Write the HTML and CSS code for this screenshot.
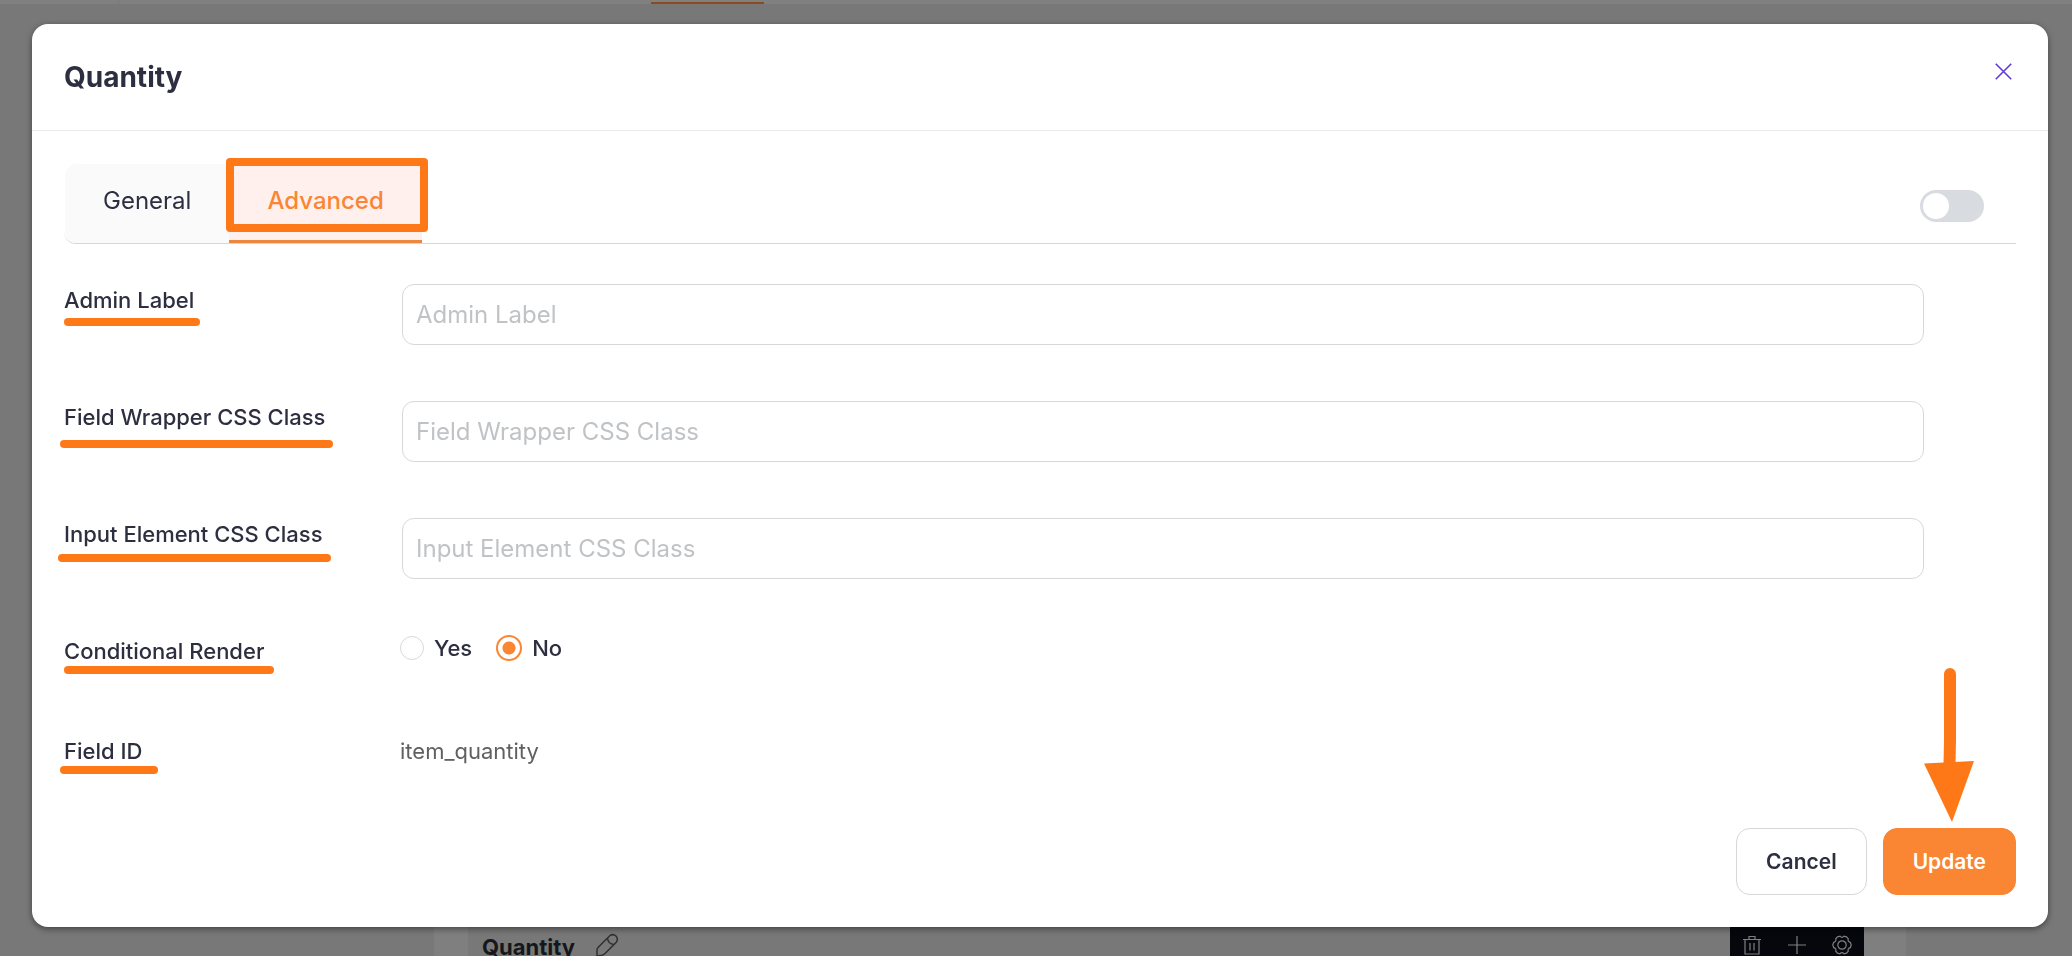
FILE: index.html
```html
<!DOCTYPE html>
<html lang="en">
<head>
<meta charset="utf-8">
<meta name="viewport" content="width=device-width, initial-scale=1">
<title>Quantity</title>
<link rel="stylesheet" href="styles.css">
</head>
<body>
<div class="page">
  <div class="page-nav"><span class="nav-side"></span><span class="nav-active"></span></div>
  <main class="page-main">
    <div class="field-card">
      <div class="field-head">
        <span class="field-name">Quantity</span>
        <svg class="icon-pencil" viewBox="0 0 24 24" aria-hidden="true"><path d="M2 23V17Q2 15.500 3.500 14L15 2.500Q18 .5 21 3Q23.500 6 21.500 9L10 20.500Q8.500 22 7 22.300ZM12.500 5Q13 11 19 11.500"/></svg>
      </div>
      <div class="field-tools">
        <button type="button" aria-label="Delete"><svg viewBox="0 0 20 20"><path d="M1 4.500h18M3 4.500v14.500h14V4.500M7 4.500V1.500h6v3M8 8v7.500M12 8v7.500"/></svg></button>
        <button type="button" aria-label="Add"><svg viewBox="0 0 20 20"><path d="M10 1v18M1 10h18"/></svg></button>
        <button type="button" aria-label="Settings"><svg viewBox="0 0 20 20"><path d="M5.500 1.800L8 1.200Q10 3.500 12 1.200L14.500 1.800L16.300 3.800Q15.300 6.500 18.300 7.300L19.200 10L18.300 12.700Q15.300 13.500 16.300 16.200L14.500 18.200L12 18.800Q10 16.500 8 18.800L5.500 18.200L3.700 16.200Q4.700 13.500 1.700 12.700L.8 10L1.700 7.300Q4.700 6.500 3.700 3.800Z"/><circle cx="10" cy="10" r="4.200"/></svg></button>
      </div>
    </div>
  </main>
</div>

<div class="overlay">
  <form class="modal" role="dialog" aria-labelledby="modal-title">
    <header class="modal-header">
      <h1 class="modal-title" id="modal-title">Quantity</h1>
      <button class="close" type="button" aria-label="Close"><svg viewBox="0 0 16 16"><path d="M.7.7l14.600 14.600M15.300.7L.7 15.300"/></svg></button>
    </header>
    <div class="modal-body">
      <div class="tabs">
        <div class="tab-list" role="tablist">
          <button class="tab" type="button" role="tab" aria-selected="false">General</button>
          <button class="tab tab-active" type="button" role="tab" aria-selected="true">Advanced<span class="callout-box"></span></button>
        </div>
        <input class="toggle" type="checkbox" role="switch" aria-label="Advanced mode">
      </div>
      <div class="fields">
        <div class="row">
          <label class="label" for="admin-label">Admin Label<span class="mark mark-admin"></span></label>
          <input class="text-input" id="admin-label" type="text" placeholder="Admin Label">
        </div>
        <div class="row">
          <label class="label" for="wrapper-class">Field Wrapper CSS Class<span class="mark mark-wrapper"></span></label>
          <input class="text-input" id="wrapper-class" type="text" placeholder="Field Wrapper CSS Class">
        </div>
        <div class="row">
          <label class="label" for="element-class">Input Element CSS Class<span class="mark mark-element"></span></label>
          <input class="text-input" id="element-class" type="text" placeholder="Input Element CSS Class">
        </div>
        <div class="row row-radio" role="radiogroup" aria-labelledby="cond-label">
          <span class="label" id="cond-label">Conditional Render<span class="mark mark-render"></span></span>
          <div class="options">
            <label class="option"><input class="radio" type="radio" name="conditional" value="yes">Yes</label>
            <label class="option"><input class="radio" type="radio" name="conditional" value="no" checked>No</label>
          </div>
        </div>
        <div class="row">
          <span class="label">Field ID<span class="mark mark-id"></span></span>
          <span class="value">item_quantity</span>
        </div>
      </div>
      <footer class="actions">
        <button class="btn btn-cancel" type="button">Cancel</button>
        <button class="btn btn-update" type="submit">Update
          <svg class="callout-arrow" viewBox="0 0 50 154" aria-hidden="true"><path class="shaft" d="M26 6V72L25.500 96"/><path class="head" d="M0 95.500L50 93 28 154z"/></svg>
        </button>
      </footer>
    </div>
  </form>
</div>
</body>
</html>
```
FILE: styles.css
```css
*, *::before, *::after { box-sizing: border-box; }

:root {
  --ink: #2d2f40;
  --accent: #fa8532;
  --callout: #ff7817;
  --line: #d6d8da;
}

body {
  margin: 0;
  font-family: Inter, "Liberation Sans", sans-serif;
  color: var(--ink);
}

button, input { font: inherit; color: inherit; margin: 0; }
button { padding: 0; border: 0; background: none; }

/* Builder page behind the dialog */
.page {
  display: flex;
  flex-direction: column;
  height: 100vh;
  overflow: hidden;
  background: #787878;
}
.page-nav {
  display: flex;
  align-items: flex-end;
  height: 4px;
  background: #808080;
}
.nav-side { width: 119px; height: 4px; border-right: 1px solid #797979; }
.nav-active { width: 113px; height: 2px; margin-left: 532px; background: #8b4a1e; }
.page-main {
  flex: 1;
  display: flex;
  flex-direction: column;
  justify-content: flex-end;
  padding: 0 166px 0 434px;
}
.field-card {
  display: flex;
  justify-content: space-between;
  height: 40px;
  margin-bottom: -5px;
  padding: 0 42px 0 34px;
  background: #7f7f7f;
}
.field-head {
  flex: 1;
  display: flex;
  align-items: flex-end;
  gap: 20px;
  padding-left: 14px;
  background: #787878;
}
.field-name { font-size: 22px; line-height: 28px; font-weight: 700; color: #15171c; }
.icon-pencil { width: 24px; height: 24px; margin-bottom: 4px; fill: none; stroke: #303030; stroke-width: 1.500; }
.field-tools {
  display: flex;
  align-items: flex-end;
  justify-content: space-between;
  width: 134px;
  padding: 0 12px 6px;
  background: #05070c;
}
.field-tools svg { display: block; width: 20px; height: 20px; fill: none; stroke: #808080; stroke-width: 1.200; }

/* Dialog */
.overlay {
  position: fixed;
  inset: 0;
  overflow: auto;
  padding: 24px 24px 29px 32px;
}
.modal {
  border-radius: 16px;
  background: #fff;
  box-shadow: 0 2px 6px rgba(0, 0, 0, .45);
}
.modal-header {
  display: flex;
  justify-content: space-between;
  align-items: flex-start;
  padding: 34px 36px 34px 32px;
  border-bottom: 1px solid #eaebec;
}
.modal-title { margin: 0; font-size: 28px; line-height: 38px; font-weight: 700; }
.close { padding: 5px 0; }
.close svg { display: block; width: 17px; height: 17px; fill: none; stroke: #5f3bdc; stroke-width: 1.500; }
.modal-body { padding: 33px 32px 32px; }

.tabs {
  display: flex;
  justify-content: space-between;
  align-items: center;
  padding: 0 32px 0 1px;
  border-bottom: 1px solid var(--line);
  border-radius: 12px 0 0 12px;
}
.tab-list { display: flex; border-radius: 12px 0 0 12px; background: #fafafa; }
.tab {
  position: relative;
  padding: 21px 38px 23px;
  font-size: 24px;
  line-height: 32px;
  border-bottom: 3px solid transparent;
}
.tab-active {
  color: var(--accent);
  font-weight: 500;
  background: #fff0ee;
  border-bottom-color: #ec873f;
}
.callout-box {
  position: absolute;
  inset: -6px -6px 8px -3px;
  border: 8px solid var(--callout);
  border-radius: 4px;
}
.toggle {
  appearance: none;
  width: 64px;
  height: 32px;
  margin-top: 5px;
  padding: 3px;
  border-radius: 16px;
  background: #d8dbe0;
}
.toggle::before {
  content: "";
  display: block;
  width: 26px;
  height: 26px;
  border-radius: 50%;
  background: #fff;
}

.fields {
  display: flex;
  flex-direction: column;
  gap: 56px;
  padding: 40px 92px 0 0;
}
.row {
  display: grid;
  grid-template-columns: 336px 1fr;
  align-items: start;
}
.row-radio { min-height: 44px; }
.label {
  position: relative;
  justify-self: start;
  font-size: 22px;
  line-height: 32px;
  font-weight: 500;
}
.text-input {
  justify-self: end;
  width: calc(100% - 2px);
  height: 61px;
  padding: 0 13px;
  border: 1px solid var(--line);
  border-radius: 12px;
  background: #fff;
  font-size: 24px;
}
.text-input::placeholder { color: #c0c3c6; opacity: 1; }
.options { display: flex; gap: 24px; }
.option {
  display: flex;
  align-items: center;
  gap: 10px;
  font-size: 22px;
  line-height: 24px;
  font-weight: 500;
}
.radio {
  appearance: none;
  width: 24px;
  height: 24px;
  border: 1px solid var(--line);
  border-radius: 50%;
}
.radio:checked {
  width: 26px;
  height: 26px;
  border: 2px solid var(--accent);
  background: radial-gradient(circle, var(--accent) 6px, transparent 7px);
}
.value { font-size: 22px; line-height: 32px; color: #606060; }

/* Hand-drawn underline marks over the labels */
.mark {
  position: absolute;
  height: 8px;
  border-radius: 4px;
  background: var(--callout);
}
.mark-admin { top: 34px; left: 0; right: -6px; }
.mark-wrapper { top: 39px; left: -4px; right: -8px; }
.mark-element { top: 36px; left: -6px; right: -8px; }
.mark-render { top: 31px; left: 0; right: -10px; }
.mark-id { top: 31px; left: -4px; right: -16px; }

.actions {
  display: flex;
  justify-content: flex-end;
  align-items: flex-start;
  gap: 16px;
  padding-top: 61px;
}
.btn {
  position: relative;
  padding: 18px 29px;
  border: 1px solid var(--line);
  border-radius: 14px;
  font-size: 21px;
  line-height: 29px;
  font-weight: 600;
}
.btn-update { color: #fff; background: var(--accent); border-color: var(--accent); }
.callout-arrow {
  position: absolute;
  right: 41px;
  bottom: 72px;
  width: 50px;
  height: 154px;
}
.shaft { fill: none; stroke: var(--callout); stroke-width: 12; stroke-linecap: round; }
.head { fill: var(--callout); }
```
